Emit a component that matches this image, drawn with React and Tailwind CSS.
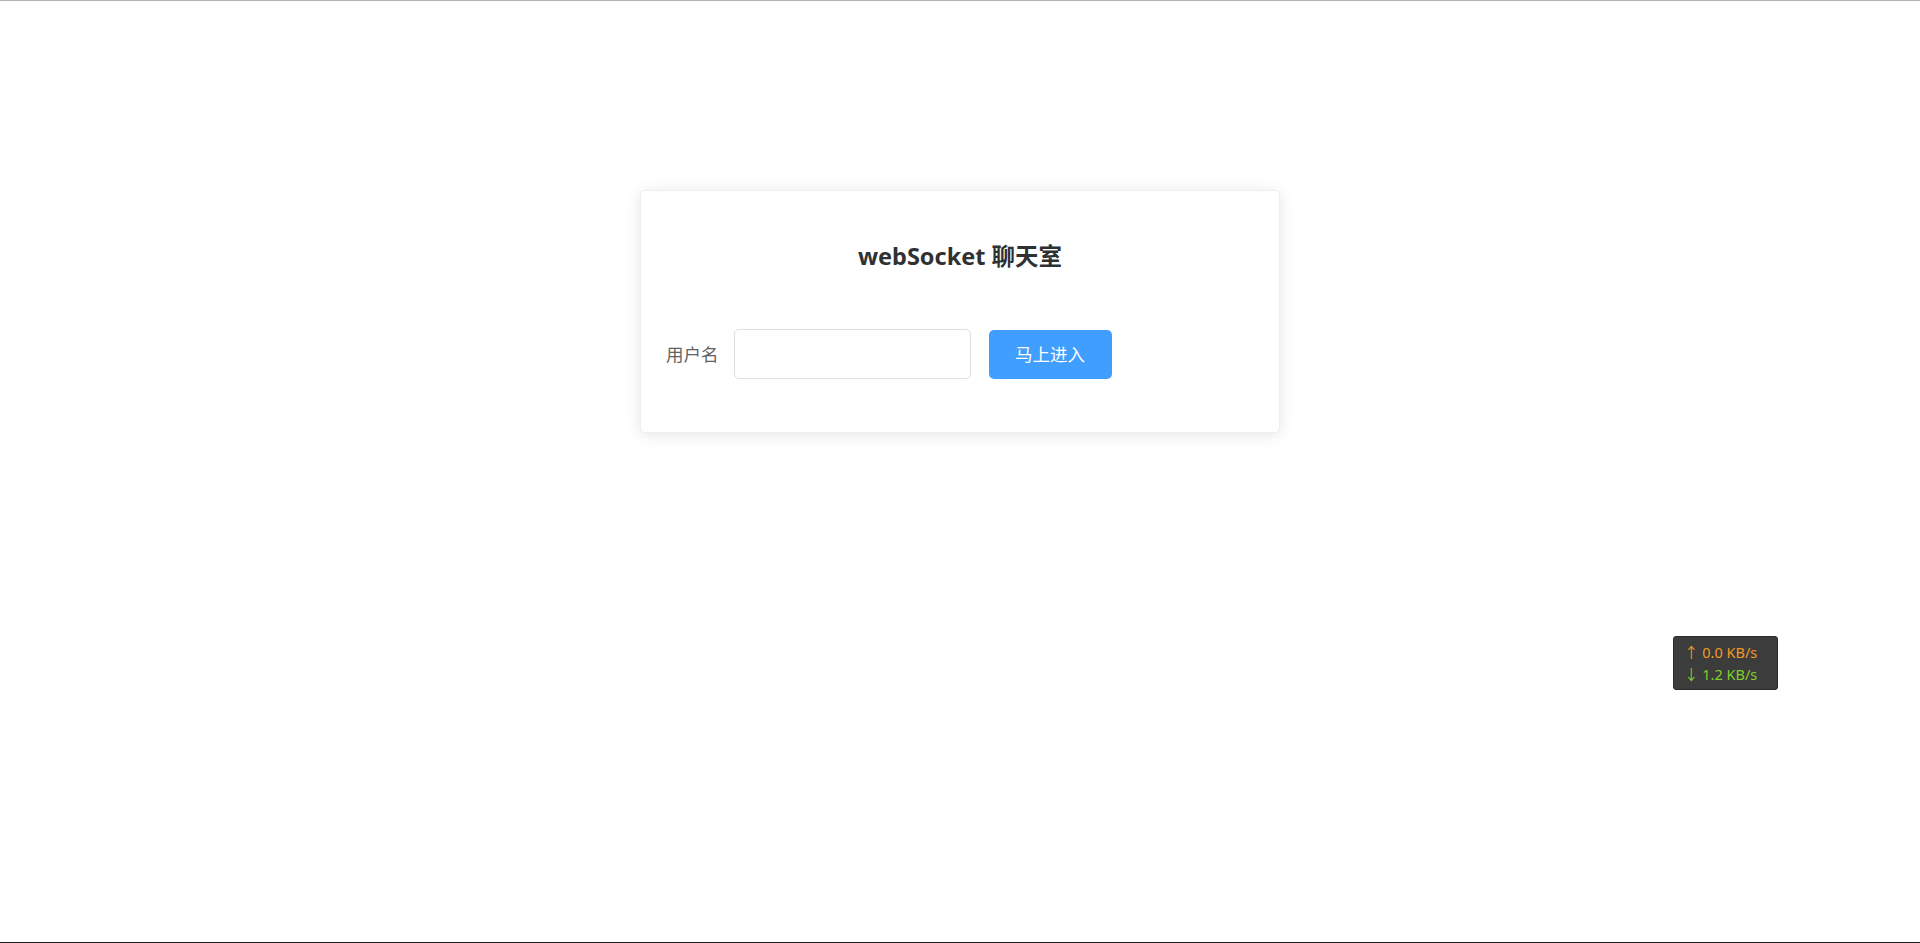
const App = () => {
  return (
    <div
      className="relative h-[943px] overflow-hidden border-t border-b border-t-[#b4b4b4] border-b-[#1c1c1c] bg-white"
      style={{ fontFamily: '"Noto Sans", "Noto Sans CJK SC", sans-serif' }}
    >
      <div className="flex justify-center pt-[189px]">
        <div className="w-[640px] rounded-[5px] border border-[#ebeef5] bg-white px-[25px] pt-[25px] pb-[25px] shadow-[0_2px_15px_0_rgba(0,0,0,0.1)]">
          <h2 className="mt-[25px] text-center text-[23.5px] leading-[30px] font-bold text-[#303133]">
            webSocket 聊天室
          </h2>
          <div className="mt-[58px] mb-[28px] flex items-center">
            <label className="pr-[15px] text-[17.5px] leading-[50px] text-[#606266]">用户名</label>
            <input
              type="text"
              className="h-[50px] w-[237px] rounded-[5px] border border-[#dcdfe6] bg-white px-[18px] text-[17.5px] text-[#606266] outline-none"
            />
            <button className="ml-[18px] h-[49px] w-[123px] rounded-[5px] bg-[#409eff] text-[17.5px] text-white">
              马上进入
            </button>
          </div>
        </div>
      </div>

      <div className="absolute left-[1673px] top-[635px] flex h-[54px] w-[105px] flex-col justify-center rounded-[3px] border border-[#2a2a2a] bg-[#3c3c3c] pl-[10px] text-[14.5px] leading-[22px]">
        <div className="text-[#f29a1f]">↑ 0.0 KB/s</div>
        <div className="text-[#7fd02a]">↓ 1.2 KB/s</div>
      </div>
    </div>
  );
};

export default App;
